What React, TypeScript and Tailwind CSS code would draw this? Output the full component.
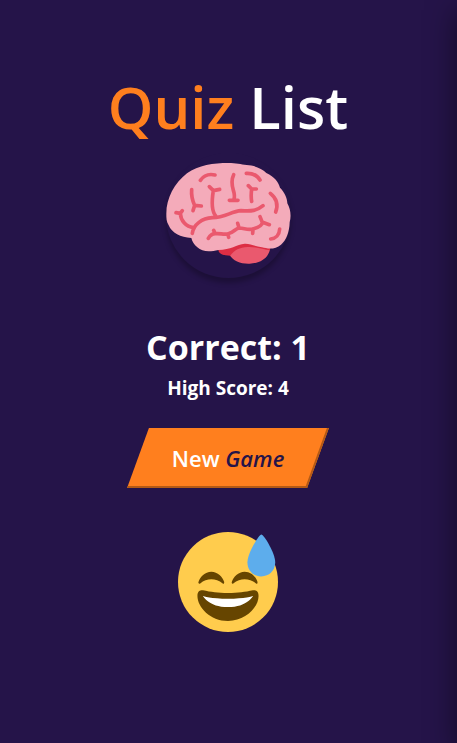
import React from "react";

function Brain() {
  return (
    <svg viewBox="45 9 375 375" className="h-full w-full" role="img" aria-label="Brain" fill="none">
      <path fill="#EA596E" d="M232 308C244 334 269 342 296 341C329 340 355 323 358 292L285 278Z" />
      <path fill="#DD2E44" d="M202 299C202 313 220 316 238 317C250 300 266 292 290 291C316 290 338 298 357 301L358 288L282 274Z" />
      <path
        fill="#F4ABBA"
        d="M46 191C46 145 70 99 108 70C142 45 188 39 232 39C255 39 270 43 287 45C309 46 332 55 346 69C371 80 383 98 387 113C401 127 409 145 409 160C419 178 421 199 416 217C415 247 406 271 390 284C373 299 351 297 333 292C312 289 297 280 281 281C257 284 239 299 202 300C177 306 153 306 139 292C129 284 124 275 121 264C89 263 62 248 53 226C46 214 46 204 46 191Z"
      />
      <g stroke="#EA596E" strokeWidth="11" strokeLinecap="round" strokeLinejoin="round">
        <path d="M148 91C158 77 175 71 192 75" />
        <path d="M122 119C120 143 126 155 131 166L126 182M131 166L151 168" />
        <path d="M75 188L88 190L94 182M88 190C89 211 104 230 128 233" />
        <path d="M124 250C128 223 153 205 184 203C223 203 240 184 270 182C302 184 317 183 336 167" />
        <path d="M194 198C180 181 182 153 187 122L175 110M187 122L206 118" />
        <path d="M248 74C237 97 246 116 249 128C251 138 250 147 247 151M235 151H261" />
        <path d="M286 70C304 69 319 77 327 90" />
        <path d="M292 107L302 117L316 117M302 117C300 132 300 143 302 154" />
        <path d="M358 130C376 144 382 164 374 186" />
        <path d="M386 237C385 255 374 266 359 267" />
        <path d="M172 265C177 256 184 251 193 251C208 249 222 256 235 250C248 247 254 235 266 234C281 235 294 242 308 236C323 232 333 228 334 217L327 200M335 217L355 224M188 241L192 250M231 253L233 262M260 220L264 233M306 239L305 250" />
      </g>
    </svg>
  );
}

function SweatSmile() {
  return (
    <svg viewBox="0 0 36 36" className="h-[100px] w-[100px]" role="img" aria-label="Smiling face with sweat">
      <circle cx="18" cy="18" r="18" fill="#FFCC4D" />
      <path fill="#664500" d="M16.1 18.5C14.8 17.5 13.4 17 12 17C10.6 17 9.2 17.5 8 18.5C7.5 18.8 7.2 18.4 7.4 17.9C7.9 16.2 9.7 14.3 12 14.3C14.3 14.3 16.1 16.2 16.6 17.9C16.7 18.4 16.5 18.8 16.1 18.5ZM28.1 18.5C26.8 17.5 25.4 17 24 17C22.6 17 21.2 17.5 19.9 18.5C19.5 18.8 19.2 18.4 19.4 17.9C19.9 16.2 21.7 14.3 24 14.3C26.3 14.3 28.1 16.2 28.6 17.9C28.7 18.4 28.5 18.8 28.1 18.5Z" />
      <path fill="#664500" d="M18 22C14.3 22 11.9 21.6 9 21C8.3 20.9 7 21 7 23C7 27 11.6 32 18 32C24.4 32 29 27 29 23C29 21 27.7 20.9 27 21C24.1 21.6 21.7 22 18 22Z" />
      <path fill="#FFFFFF" d="M9 23C9 23 12 24 18 24C24 24 27 23 27 23C27 23 25 27 18 27C11 27 9 23 9 23Z" />
      <path fill="#5DADEC" d="M35 11.1C34.9 14 32.7 16.1 29.8 16C26.9 15.9 24.9 13.7 25 10.7C25.2 7.3 29.2 0.9 30 0.9C30.9 0.9 35.1 7.7 35 11.1Z" />
    </svg>
  );
}

export default function App() {
  return (
    <main className="relative flex min-h-screen flex-col items-center overflow-hidden bg-[#251449] pt-16 pr-px pb-10 font-['Open_Sans','Noto_Sans',sans-serif] text-white">
      <aside aria-hidden="true" className="absolute top-0 bottom-0 left-full w-20 shadow-[0_10px_30px_rgba(0,0,0,0.5)]" />
      <h1 className="text-[58px] leading-[85px] font-semibold whitespace-nowrap">
        <span className="text-[#ff7f1e]">Quiz</span> List
      </h1>
      <div className="mt-1 h-[125px] w-[125px] rounded-full shadow-[0_5px_5px_rgba(0,0,0,0.25)]">
        <Brain />
      </div>
      <h2 className="mt-11 text-[34px] leading-[50px] font-bold">Correct: 1</h2>
      <h3 className="text-[19px] leading-8 font-bold">High Score: 4</h3>
      <button
        type="button"
        className="relative isolate mt-6 h-[60px] w-[180px] cursor-pointer text-[22px] leading-8 font-semibold before:absolute before:inset-0 before:-z-10 before:-skew-x-[20deg] before:border-r-2 before:border-b-2 before:border-[#b35915] before:bg-[#ff7f1e] before:content-['']"
      >
        New <em className="text-[#251449]">Game</em>
      </button>
      <div className="mt-11">
        <SweatSmile />
      </div>
    </main>
  );
}
